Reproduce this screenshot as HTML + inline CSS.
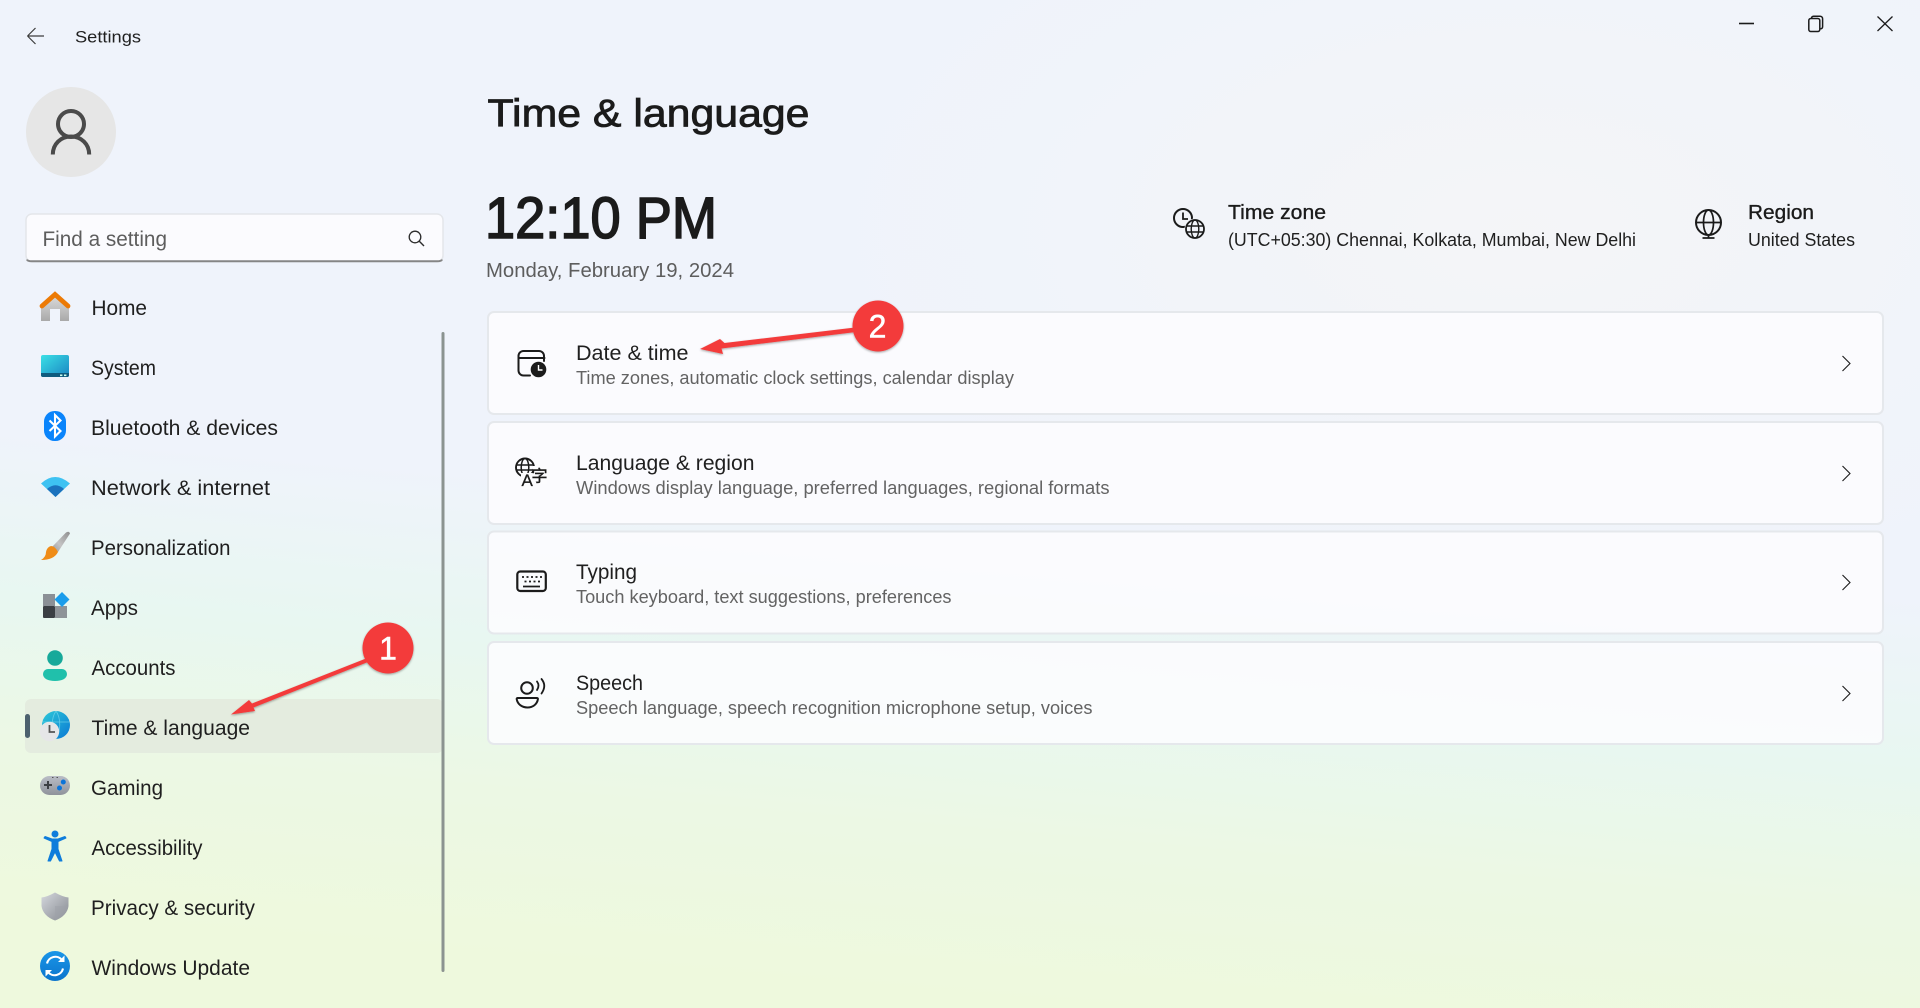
<!DOCTYPE html>
<html lang="en"><head><meta charset="utf-8"><title>Settings</title>
<style>
html,body{margin:0;padding:0;width:1920px;height:1008px;overflow:hidden;background:radial-gradient(ellipse 700px 380px at 1520px 230px,rgba(246,246,246,.75),rgba(246,246,246,0)),linear-gradient(185deg,#eff3fb 0%,#eff3fb 51%,#e8f7f1 65%,#ecf8e4 78%,#eef9dd 92%)}
svg{display:block;position:absolute;left:0;top:0}
text{font-family:"Liberation Sans","Noto Sans CJK SC",sans-serif}
.n{font-size:21px;fill:#1f1f1f}
.t{font-size:21px;fill:#1f1f1f}
.s{font-size:18px;fill:#636363}
.b{fill:#1b1b1b;stroke:#1b1b1b;stroke-width:.8}
.i{fill:none;stroke:#1b1b1b;stroke-width:2;stroke-linecap:round;stroke-linejoin:round}
.c{fill:#fcfcfe;fill-opacity:.9;stroke:#e5e8ec;stroke-width:2}
</style></head><body>
<svg width="1920" height="1008" viewBox="0 0 1920 1008" xmlns="http://www.w3.org/2000/svg">
<defs>
<linearGradient id="hb" x1="0" y1="0" x2="0" y2="1"><stop offset="0" stop-color="#dcdcdc"/><stop offset="1" stop-color="#a9a9a9"/></linearGradient>
<linearGradient id="sy" x1="0" y1="0" x2="1" y2="1"><stop offset="0" stop-color="#3be0e6"/><stop offset="1" stop-color="#1a85c2"/></linearGradient>
<linearGradient id="gl" x1="0" y1="0" x2="1" y2="1"><stop offset="0" stop-color="#2cc9d8"/><stop offset="1" stop-color="#0b78d4"/></linearGradient>
<linearGradient id="gp" x1="0" y1="0" x2="0" y2="1"><stop offset="0" stop-color="#b9bdc6"/><stop offset="1" stop-color="#8f939b"/></linearGradient>
<linearGradient id="br" x1="1" y1="0" x2="0" y2="1"><stop offset="0" stop-color="#8f8f8f"/><stop offset=".6" stop-color="#c4c4c4"/><stop offset="1" stop-color="#9a9a9a"/></linearGradient>
<linearGradient id="sh" x1="0" y1="0" x2="1" y2="1"><stop offset="0" stop-color="#d5d8de"/><stop offset="1" stop-color="#85898f"/></linearGradient>
<linearGradient id="up" x1="0" y1="0" x2="0" y2="1"><stop offset="0" stop-color="#1a96e8"/><stop offset="1" stop-color="#0b74cc"/></linearGradient>
<filter id="ds" x="-20%" y="-20%" width="140%" height="140%"><feDropShadow dx="0" dy="1" stdDeviation="1" flood-color="#000" flood-opacity=".35"/></filter>
</defs>

<!-- title bar -->
<path d="M27.5 36H44M27.5 36L35.5 28M27.5 36L35.5 44" fill="none" stroke="#3c3c3c" stroke-width="1.2"/>
<text x="75" y="42.5" font-size="17" fill="#1f1f1f" textLength="66" lengthAdjust="spacingAndGlyphs">Settings</text>
<path d="M1739 23.5H1754" stroke="#1b1b1b" stroke-width="1.6"/>
<path d="M1808.8 20.5a2 2 0 0 1 2-2h7a2 2 0 0 1 2 2v9a2 2 0 0 1-2 2h-7a2 2 0 0 1-2-2zM1811.5 18.5v-.3a2 2 0 0 1 2-2h6.5a2.6 2.6 0 0 1 2.6 2.6v8a2 2 0 0 1-2 2" fill="none" stroke="#1b1b1b" stroke-width="1.5"/>
<path d="M1877.5 16.5L1892.5 31M1892.5 16.5L1877.5 31" stroke="#1b1b1b" stroke-width="1.3"/>

<!-- avatar -->
<circle cx="71" cy="132" r="45" fill="#e6e6e6"/>
<circle cx="71" cy="124" r="13" fill="none" stroke="#4a4a4a" stroke-width="4"/>
<path d="M52.8 154.5c0-10.5 8-18 18.2-18s18.200 7.500 18.200 18" fill="none" stroke="#4a4a4a" stroke-width="4"/>

<!-- search -->
<rect x="26" y="214" width="417" height="47.500" rx="6" fill="#fbfbfe" stroke="#e4e6ea" stroke-width="1.500"/>
<path d="M27 259.500Q27.500 261.300 32 261.300H437Q441.500 261.300 442 259.500" fill="none" stroke="#858585" stroke-width="2"/>
<text x="42.500" y="246" font-size="21" fill="#5d5d5d" textLength="124.500" lengthAdjust="spacingAndGlyphs">Find a setting</text>
<circle cx="415" cy="237" r="5.800" fill="none" stroke="#2c2c2c" stroke-width="1.300"/><path d="M419.300 241.300L424 246" stroke="#2c2c2c" stroke-width="1.400"/>

<!-- selected row -->
<rect x="25" y="699" width="418" height="54" rx="6" fill="#e4ecdf"/>
<rect x="25" y="714" width="5" height="24" rx="2.500" fill="#4c616e"/>
<!-- scrollbar -->
<rect x="441.500" y="332" width="3" height="640" rx="1.500" fill="#8b9390"/>

<!-- nav icons -->
<path d="M41 321v-14l14-12 14 12v14H60v-12h-10v12z" fill="url(#hb)"/>
<path d="M42 306L55 294.500 68 306" fill="none" stroke="#ec7a05" stroke-width="4.800" stroke-linecap="round" stroke-linejoin="miter"/>

<rect x="41" y="355" width="28" height="22" rx="2" fill="url(#sy)"/><path d="M41 373h28v2a2 2 0 0 1-2 2H43a2 2 0 0 1-2-2z" fill="#0f5b7e"/><rect x="60" y="374.500" width="2.400" height="1.600" fill="#cfe"/><rect x="64" y="374.500" width="2.400" height="1.600" fill="#cfe"/>

<rect x="44" y="411" width="22" height="30" rx="10.500" fill="#0a84fb"/>
<path d="M49.500 420.500L60.500 431L55 436.500V415L60.500 420.500L49.500 431" fill="none" stroke="#fff" stroke-width="2.100"/>

<path d="M41 483.500Q55 470.500 70 483.500L55.500 497z" fill="#3ec2f2"/><path d="M47 489Q55.500 481.500 64 489L55.500 497z" fill="#1b72bd"/>

<path d="M52 547L66 532.500Q69 530.500 70 533.500L58 552z" fill="url(#br)"/>
<path d="M51 546Q55 546 58 552Q54 560 41 560Q46 557 46 552Q47 547 51 546z" fill="#ef8c17"/>

<rect x="43" y="594" width="12" height="12" fill="#8b9096"/><rect x="43" y="606" width="12" height="12" rx="1" fill="#3b3f44"/><rect x="55" y="606" width="12" height="12" fill="#8e9398"/>
<path d="M62 592L69.500 599.500 62 607 54.500 599.500z" fill="#1b9deb"/>

<circle cx="55" cy="658" r="7.800" fill="#17a99a"/><path d="M43 674a5 5 0 0 1 5-5h14a5 5 0 0 1 5 5c0 4.500-5 7-12 7s-12-2.500-12-7z" fill="#20c0ab"/>

<circle cx="56" cy="725" r="14" fill="url(#gl)"/><path d="M42.500 722h27M56 711c-5 7-5 20 0 28M56 711c5 7 5 20 0 28" fill="none" stroke="#7fdcec" stroke-width=".8" opacity=".7"/>
<circle cx="49.500" cy="731.500" r="9.700" fill="#e6e6e8"/><path d="M49.500 725v7h5.500" fill="none" stroke="#555" stroke-width="1.800"/>

<rect x="40" y="776" width="30" height="19" rx="9.500" fill="url(#gp)"/><path d="M48 781v8M44 785h8" stroke="#3d4045" stroke-width="2"/><circle cx="63.300" cy="782" r="2.500" fill="#0b74d8"/><circle cx="59.500" cy="788" r="2.500" fill="#0b74d8"/><rect x="52" y="777" width="1.500" height="1" fill="#555"/><rect x="56.500" y="777" width="1.500" height="1" fill="#555"/>

<circle cx="55" cy="834" r="3.500" fill="#0f7ddb"/><path d="M44 838L52 841.500V849L48 861H50.500L55 852L59.500 861H62L58 849V841.500L66 838 65 836.500 58 839H52L45 836.500z" fill="#0f7ddb" stroke="#0f7ddb" stroke-width="1" stroke-linejoin="round"/>

<path d="M55 892.500Q47 897 41.500 897.500V906Q43 916 55 920.500Q67 916 68.500 906V897.500Q63 897 55 892.500z" fill="url(#sh)"/><path d="M55 892.500V920.500Q67 916 68.500 906H55z" fill="#9ea2a9" opacity=".55"/>

<circle cx="55" cy="966" r="15" fill="url(#up)"/>
<path d="M47 963.500a8.500 8.500 0 0 1 15-3.500M63 968.500a8.500 8.500 0 0 1-15 3.500" fill="none" stroke="#fff" stroke-width="2.100"/><path d="M64.500 955.500v6.500H58zM45.500 976.500v-6.500H52z" fill="#fff"/>

<!-- nav labels -->
<text class="n" x="91.500" y="315" textLength="55.500" lengthAdjust="spacingAndGlyphs">Home</text>
<text class="n" x="91" y="375" textLength="65" lengthAdjust="spacingAndGlyphs">System</text>
<text class="n" x="91" y="435" textLength="187" lengthAdjust="spacingAndGlyphs">Bluetooth &amp; devices</text>
<text class="n" x="91" y="495" textLength="179" lengthAdjust="spacingAndGlyphs">Network &amp; internet</text>
<text class="n" x="91" y="555" textLength="139.500" lengthAdjust="spacingAndGlyphs">Personalization</text>
<text class="n" x="91" y="615" textLength="47" lengthAdjust="spacingAndGlyphs">Apps</text>
<text class="n" x="91.500" y="675" textLength="84" lengthAdjust="spacingAndGlyphs">Accounts</text>
<text class="n" x="91.500" y="735" textLength="158.500" lengthAdjust="spacingAndGlyphs">Time &amp; language</text>
<text class="n" x="91" y="795" textLength="72" lengthAdjust="spacingAndGlyphs">Gaming</text>
<text class="n" x="91.500" y="855" textLength="111" lengthAdjust="spacingAndGlyphs">Accessibility</text>
<text class="n" x="91" y="915" textLength="164" lengthAdjust="spacingAndGlyphs">Privacy &amp; security</text>
<text class="n" x="91.500" y="975" textLength="158.500" lengthAdjust="spacingAndGlyphs">Windows Update</text>

<!-- header -->
<text class="b" x="487.500" y="126.700" font-size="39" textLength="322" lengthAdjust="spacingAndGlyphs">Time &amp; language</text>
<text x="485" y="238" font-size="58" fill="#1b1b1b" stroke="#1b1b1b" stroke-width="1.600" textLength="232" lengthAdjust="spacingAndGlyphs">12:10 PM</text>
<text x="486" y="277" font-size="20" fill="#5d5d5d" textLength="248" lengthAdjust="spacingAndGlyphs">Monday, February 19, 2024</text>

<circle cx="1183" cy="218" r="9" fill="none" stroke="#1b1b1b" stroke-width="2"/><path d="M1183 212.500v6.500h5" fill="none" stroke="#1b1b1b" stroke-width="1.800"/>
<circle cx="1195" cy="229" r="10.500" fill="#f1f3f9"/>
<circle cx="1195" cy="229" r="9" fill="none" stroke="#1b1b1b" stroke-width="1.800"/><ellipse cx="1195" cy="229" rx="3.800" ry="9" fill="none" stroke="#1b1b1b" stroke-width="1.400"/><path d="M1186.500 226h17M1186.500 232h17" stroke="#1b1b1b" stroke-width="1.400"/>
<text class="b" style="stroke-width:.35" x="1228" y="219" font-size="20" textLength="98" lengthAdjust="spacingAndGlyphs">Time zone</text>
<text x="1228" y="246" font-size="18" fill="#1f1f1f" textLength="408" lengthAdjust="spacingAndGlyphs">(UTC+05:30) Chennai, Kolkata, Mumbai, New Delhi</text>

<circle cx="1708.500" cy="222.500" r="12.500" fill="none" stroke="#1b1b1b" stroke-width="2"/><ellipse cx="1708.500" cy="222.500" rx="5" ry="12.500" fill="none" stroke="#1b1b1b" stroke-width="1.700"/><path d="M1695.500 222.500h26M1708.500 235v3M1702.500 238h12" stroke="#1b1b1b" stroke-width="1.800"/>
<text class="b" style="stroke-width:.35" x="1748" y="219" font-size="20" textLength="66" lengthAdjust="spacingAndGlyphs">Region</text>
<text x="1748" y="246" font-size="18" fill="#1f1f1f" textLength="107" lengthAdjust="spacingAndGlyphs">United States</text>

<!-- cards -->
<rect class="c" x="488" y="312" width="1395" height="102" rx="6"/>
<rect class="c" x="488" y="422" width="1395" height="102" rx="6"/>
<rect class="c" x="488" y="531.500" width="1395" height="102" rx="6"/>
<rect class="c" x="488" y="642" width="1395" height="102" rx="6"/>

<!-- card icons -->
<path class="i" d="M530 375.500h-6.500a5 5 0 0 1-5-5v-14.500a5 5 0 0 1 5-5h15.500a5 5 0 0 1 5 5v5M518.500 358h26"/>
<circle cx="538.500" cy="369.500" r="7.800" fill="#1b1b1b"/><path d="M538.500 365v5h4" fill="none" stroke="#fff" stroke-width="1.400"/>

<circle cx="525" cy="467.500" r="9" fill="none" stroke="#1b1b1b" stroke-width="1.900"/><ellipse cx="525" cy="467.500" rx="3.800" ry="9" fill="none" stroke="#1b1b1b" stroke-width="1.500"/><path d="M516 465h18M516 470h18" stroke="#1b1b1b" stroke-width="1.500"/>
<rect x="521" y="473" width="12" height="16" fill="#fcfcfe"/><rect x="533" y="466" width="14" height="18" fill="#fcfcfe"/>
<text x="521.500" y="486" font-size="17" fill="#1b1b1b" stroke="#1b1b1b" stroke-width=".3">A</text>
<text x="531.500" y="481.500" font-size="16" fill="#1b1b1b" stroke="#1b1b1b" stroke-width=".45">字</text>

<rect x="517.300" y="571.500" width="28.500" height="19.500" rx="3" fill="none" stroke="#1b1b1b" stroke-width="2.200"/>
<path d="M522 577h2M526.500 577h2M531 577h2M535.500 577h2M540 577h2M524.500 581.500h2M529 581.500h2M533.500 581.500h2M538 581.500h2" stroke="#1b1b1b" stroke-width="1.800"/><path d="M523 586.500h17" stroke="#1b1b1b" stroke-width="1.700"/>

<circle cx="527" cy="688" r="5.800" fill="none" stroke="#1b1b1b" stroke-width="2"/>
<path d="M517.500 698h19.500a.9.9 0 0 1 .9 1.200c-.8 5-5 8.300-10.500 8.300s-9.800-3.300-10.700-8.300a.9.900 0 0 1 .8-1.200z" fill="none" stroke="#1b1b1b" stroke-width="2"/>
<path class="i" style="stroke-width:1.800" d="M537 681.500q3 4 0 8.500M541.500 679q5.500 6.500 0 14.500"/>

<!-- card text -->
<text class="t" x="576" y="360" textLength="112.500" lengthAdjust="spacingAndGlyphs">Date &amp; time</text>
<text class="s" x="576" y="384" textLength="438" lengthAdjust="spacingAndGlyphs">Time zones, automatic clock settings, calendar display</text>
<text class="t" x="576" y="470" textLength="178.500" lengthAdjust="spacingAndGlyphs">Language &amp; region</text>
<text class="s" x="576" y="494" textLength="533.500" lengthAdjust="spacingAndGlyphs">Windows display language, preferred languages, regional formats</text>
<text class="t" x="576" y="579" textLength="61" lengthAdjust="spacingAndGlyphs">Typing</text>
<text class="s" x="576" y="603" textLength="375.500" lengthAdjust="spacingAndGlyphs">Touch keyboard, text suggestions, preferences</text>
<text class="t" x="576" y="690" textLength="67" lengthAdjust="spacingAndGlyphs">Speech</text>
<text class="s" x="576" y="714" textLength="516.500" lengthAdjust="spacingAndGlyphs">Speech language, speech recognition microphone setup, voices</text>

<!-- chevrons -->
<path d="M1842.500 356L1850 363.500 1842.500 371" fill="none" stroke="#1b1b1b" stroke-width="1.100"/>
<path d="M1842.500 466L1850 473.500 1842.500 481" fill="none" stroke="#1b1b1b" stroke-width="1.100"/>
<path d="M1842.500 575L1850 582.500 1842.500 590" fill="none" stroke="#1b1b1b" stroke-width="1.100"/>
<path d="M1842.500 686L1850 693.500 1842.500 701" fill="none" stroke="#1b1b1b" stroke-width="1.100"/>

<!-- annotations -->
<g filter="url(#ds)">
<path d="M366 658.500L252 703.500 249 700 231 714.500 255 711 253.500 707.500 368 662z" fill="#f33b3b"/>
<circle cx="388" cy="648" r="25.500" fill="#f33b3b"/>
<path d="M855 327.500L724.500 343 720 339 700 349 723 354 721.500 348.500 856 332z" fill="#f33b3b"/>
<circle cx="878" cy="326" r="25.500" fill="#f33b3b"/>
</g>
<text x="388" y="659.500" font-size="32" fill="#fff" stroke="#fff" stroke-width=".5" text-anchor="middle">1</text>
<text x="877.500" y="337.500" font-size="32" fill="#fff" stroke="#fff" stroke-width=".5" text-anchor="middle">2</text>
</svg>
</body></html>
